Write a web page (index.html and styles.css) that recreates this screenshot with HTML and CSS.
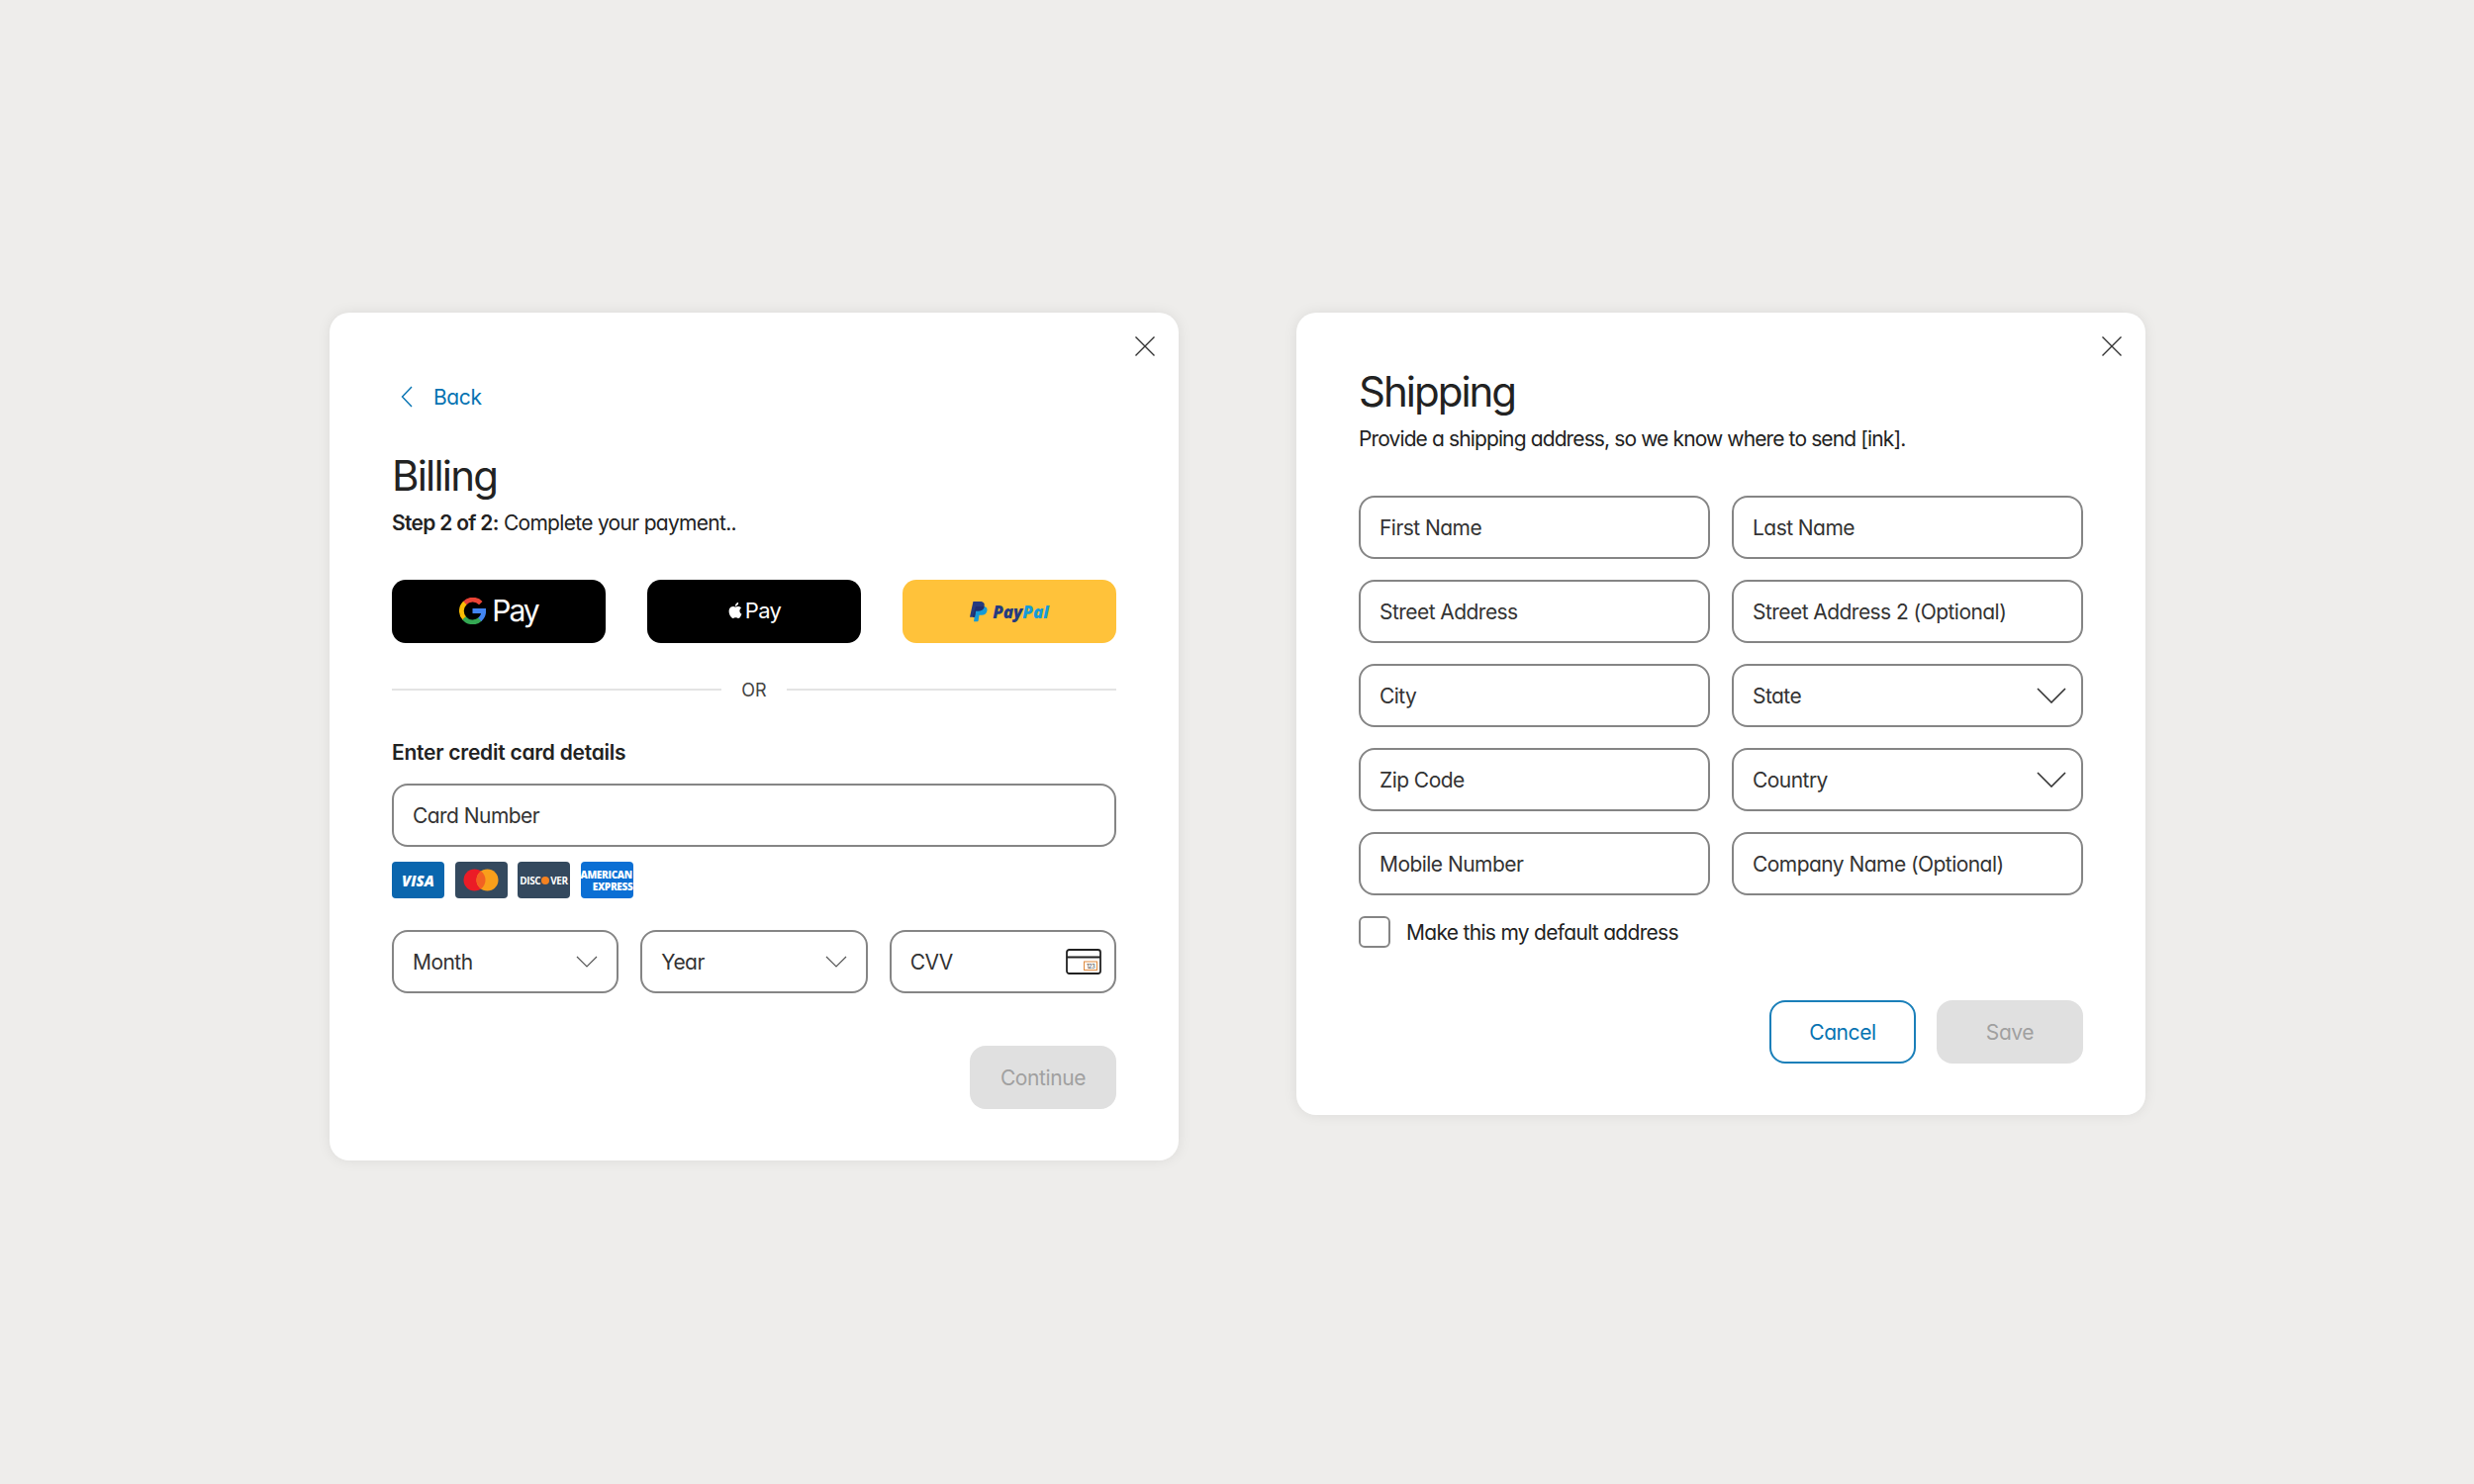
FILE: index.html
```html
<!DOCTYPE html>
<html lang="en">
<head>
    <meta charset="UTF-8">
    <meta name="viewport" content="width=device-width, initial-scale=1.0">
    <title>Billing and Shipping</title>
    <link rel="stylesheet" href="styles.css">
</head>
<body>
    <div class="board">

        <!-- Billing -->
        <section class="card billing">
            <button class="close" aria-label="Close">
                <svg width="20" height="20" viewBox="0 0 20 20"><path d="M0.500 0.500 19.500 19.500M19.500 0.500 0.500 19.500" stroke="#333" stroke-width="1.4" fill="none"/></svg>
            </button>
            <a class="back">
                <svg width="12" height="22" viewBox="0 0 12 22"><path d="M11 1 1.500 11 11 21" stroke="#0673b2" stroke-width="1.4" fill="none"/></svg>
                <span>Back</span>
            </a>
            <h1 class="billing-title">Billing</h1>
            <p class="sub step"><b>Step 2 of 2:</b> Complete your payment..</p>

            <div class="wallets">
                <button class="wallet dark">
                    <svg class="g-logo" width="27" height="27" viewBox="0 0 26 26" fill="none" stroke-width="4.600">
                        <path d="M21 5.400A10.800 10.800 0 0 0 5.200 5.600" stroke="#ea4335"/>
                        <path d="M5.600 5.200A10.800 10.800 0 0 0 5.200 20.400" stroke="#fbbc04"/>
                        <path d="M4.800 19.900A10.800 10.800 0 0 0 20.600 21" stroke="#34a853"/>
                        <path d="M20 21.400A10.800 10.800 0 0 0 23.800 13H13" stroke="#4285f4"/>
                    </svg>
                    <span class="g-pay">Pay</span>
                </button>
                <button class="wallet dark">
                    <svg class="apple-logo" width="15" height="18" viewBox="0 0 15 18"><path fill="#fff" d="M12.400 9.500c0-2 1.600-2.900 1.700-3-.9-1.400-2.400-1.600-2.900-1.600-1.200-.1-2.400.7-3 .7-.6 0-1.600-.7-2.600-.7-1.400 0-2.600.8-3.300 2-1.400 2.400-.4 6 1 8 .7 1 1.500 2.100 2.500 2 1 0 1.400-.6 2.600-.6 1.200 0 1.600.6 2.600.6 1.100 0 1.800-1 2.400-2 .8-1.100 1.100-2.200 1.100-2.300 0 0-2.100-.8-2.100-3.100ZM10.400 3.600c.5-.7.900-1.600.8-2.600-.8 0-1.800.5-2.400 1.200-.5.6-1 1.600-.8 2.500.9.100 1.800-.4 2.400-1.100Z"/></svg>
                    <span class="apple-pay">Pay</span>
                </button>
                <button class="wallet paypal">
                    <svg width="18" height="21" viewBox="0 0 18 21">
                        <path fill="#169bd7" d="M6 5h7.500c3 0 4.500 1.600 4 4.200-.6 3-2.700 4.600-5.500 4.600H9.500l-.9 5.700a1 1 0 0 1-1 .8H4Z"/>
                        <path fill="#253b80" d="M3.400 0h6.800c3.400 0 5 1.700 4.500 4.500-.6 3.300-2.800 5-6 5H6l-1 6.300H0Z"/>
                        <path fill="#1f2f70" d="M6 5h6.800c1 0 1.600.2 1.900.4C14 8 11.900 9.500 8.700 9.500H6L5 15.800H2.800Z"/>
                    </svg>
                    <span class="paypal-name"><i class="pay">Pay</i><i class="pal">Pal</i></span>
                </button>
            </div>

            <div class="divider"><span>OR</span></div>

            <h2 class="label-head">Enter credit card details</h2>
            <div class="field"><span>Card Number</span></div>

            <div class="brands">
                <div class="brand visa"><span>VISA</span></div>
                <div class="brand master">
                    <svg width="36" height="23" viewBox="0 0 36 23">
                        <circle cx="11.500" cy="11.500" r="11" fill="#eb1c26"/>
                        <circle cx="24.500" cy="11.500" r="11" fill="#f99f1b"/>
                        <path d="M18 2.600a11 11 0 0 1 0 17.800 11 11 0 0 1 0-17.800Z" fill="#f26122"/>
                    </svg>
                </div>
                <div class="brand discover"><span>DISC<em></em>VER</span></div>
                <div class="brand amex"><span>AMERICAN</span><span class="amex-b">EXPRESS</span></div>
            </div>

            <div class="expiry">
                <div class="field select-sm">
                    <span>Month</span>
                    <svg width="22" height="12" viewBox="0 0 22 12"><path d="M1 1 11 11 21 1" stroke="#555" stroke-width="1.200" fill="none"/></svg>
                </div>
                <div class="field select-sm">
                    <span>Year</span>
                    <svg width="22" height="12" viewBox="0 0 22 12"><path d="M1 1 11 11 21 1" stroke="#555" stroke-width="1.200" fill="none"/></svg>
                </div>
                <div class="field cvv">
                    <span>CVV</span>
                    <svg width="36" height="26" viewBox="0 0 36 26">
                        <rect x="1" y="1" width="34" height="24" rx="2.500" fill="#fff" stroke="#222" stroke-width="1.800"/>
                        <path d="M1 8.500H35" stroke="#222" stroke-width="1.800"/>
                        <rect x="18.500" y="13" width="13" height="8.500" fill="#fff" stroke="#e08a3c"/>
                        <text x="25" y="19.500" class="cvv-digits">123</text>
                    </svg>
                </div>
            </div>

            <div class="actions">
                <button class="btn disabled">Continue</button>
            </div>
        </section>

        <!-- Shipping -->
        <section class="card shipping">
            <button class="close" aria-label="Close">
                <svg width="20" height="20" viewBox="0 0 20 20"><path d="M0.500 0.500 19.500 19.500M19.500 0.500 0.500 19.500" stroke="#333" stroke-width="1.4" fill="none"/></svg>
            </button>
            <h1>Shipping</h1>
            <p class="sub">Provide a shipping address, so we know where to send [ink].</p>

            <div class="address">
                <div class="field"><span>First Name</span></div>
                <div class="field"><span>Last Name</span></div>
                <div class="field"><span>Street Address</span></div>
                <div class="field"><span>Street Address 2 (Optional)</span></div>
                <div class="field"><span>City</span></div>
                <div class="field select-lg">
                    <span>State</span>
                    <svg width="30" height="16" viewBox="0 0 30 16"><path d="M1 1 15 15 29 1" stroke="#333" stroke-width="1.600" fill="none"/></svg>
                </div>
                <div class="field"><span>Zip Code</span></div>
                <div class="field select-lg">
                    <span>Country</span>
                    <svg width="30" height="16" viewBox="0 0 30 16"><path d="M1 1 15 15 29 1" stroke="#333" stroke-width="1.600" fill="none"/></svg>
                </div>
                <div class="field"><span>Mobile Number</span></div>
                <div class="field"><span>Company Name (Optional)</span></div>
            </div>

            <label class="check"><i class="box"></i><span>Make this my default address</span></label>

            <div class="actions">
                <button class="btn outline">Cancel</button>
                <button class="btn disabled">Save</button>
            </div>
        </section>
    </div>
</body>
</html>
```

FILE: styles.css
```css
* {
    box-sizing: border-box;
}

body {
    margin: 0;
    min-height: 1500px;
    background: #eeedeb;
    font-family: Inter, "Noto Sans", sans-serif;
    font-feature-settings: "cv11" 1;
    color: #222;
}

.board {
    display: flex;
    align-items: flex-start;
    gap: 119px;
    padding: 316px 0 0 333px;
}

.card {
    position: relative;
    width: 858px;
    background: #fff;
    border-radius: 20px;
    padding: 70px 63px 52px;
    box-shadow: 0 0 14px rgba(0,0,0,0.08);
}

.shipping {
    padding-top: 54px;
}

.close {
    position: absolute;
    top: 24px;
    right: 24px;
    width: 20px;
    height: 20px;
    padding: 0;
    border: none;
    background: none;
    display: flex;
}

.back {
    display: flex;
    align-items: center;
    gap: 21px;
    height: 30px;
    padding-left: 9px;
    font-size: 21px;
    letter-spacing: -0.4px;
    color: #0673b2;
}

h1 {
    margin: 0;
    font-size: 42px;
    line-height: 52px;
    font-weight: 400;
    letter-spacing: -2px;
    color: #222;
}

.billing-title {
    margin-top: 39px;
    letter-spacing: -1.8px;
}

.sub {
    margin: 7px 0 0;
    font-size: 21px;
    line-height: 30px;
    letter-spacing: -0.88px;
}

.step {
    letter-spacing: -0.7px;
}

.sub b {
    font-weight: 600;
}

.wallets {
    display: flex;
    gap: 42px;
    margin-top: 42px;
}

.wallet {
    display: flex;
    align-items: center;
    justify-content: center;
    width: 216px;
    height: 64px;
    padding: 0;
    border: none;
    border-radius: 14px;
    font-family: inherit;
}

.dark {
    background: #000;
    color: #fff;
}

.g-logo {
    margin-right: 6px;
    margin-top: -2px;
}

.g-pay {
    font-size: 30px;
    letter-spacing: -2px;
    margin-top: -2px;
    font-feature-settings: normal;
}

.apple-logo {
    margin-right: 3px;
    margin-top: -3px;
}

.apple-pay {
    font-size: 22px;
    letter-spacing: -0.7px;
    margin-top: -2px;
    font-feature-settings: normal;
}

.paypal {
    background: #ffc23a;
    gap: 5px;
}

.paypal-name {
    font-family: "Open Sans", sans-serif;
    font-size: 17px;
    font-weight: 800;
}

.paypal-name i {
    font-style: italic;
}

.pay {
    color: #253b80;
}

.pal {
    color: #169bd7;
}

.divider {
    display: flex;
    align-items: center;
    gap: 20px;
    height: 30px;
    margin-top: 32px;
    font-size: 18px;
    color: #444;
}

.divider::before,
.divider::after {
    content: "";
    flex: 1;
    height: 2px;
    background: #e3e3e3;
}

.label-head {
    margin: 34px 0 0;
    font-size: 21px;
    line-height: 30px;
    font-weight: 600;
    letter-spacing: -0.25px;
}

.field {
    display: flex;
    align-items: center;
    justify-content: space-between;
    height: 64px;
    padding: 0 19px;
    border: 2px solid #858585;
    border-radius: 16px;
    background: #fff;
    font-size: 21px;
    letter-spacing: -0.55px;
    color: #333;
}

.label-head + .field {
    margin-top: 16px;
}

.select-sm {
    padding-right: 19px;
}

.select-lg {
    padding-right: 15px;
}

.brands {
    display: flex;
    gap: 10.5px;
    margin-top: 15px;
}

.brand {
    display: flex;
    flex-direction: column;
    align-items: center;
    justify-content: center;
    width: 53px;
    height: 37px;
    border-radius: 4px;
    color: #fff;
}

.visa {
    background: #0a66ae;
    font-family: "Open Sans", sans-serif;
    font-size: 15px;
    font-weight: 800;
    font-style: italic;
}

.master,
.discover {
    background: #34495e;
}

.discover {
    font-family: "Open Sans", sans-serif;
    font-size: 10px;
    font-weight: 700;
    letter-spacing: -0.4px;
}

.discover em {
    display: inline-block;
    width: 8px;
    height: 8px;
    margin: 0 1px;
    border-radius: 50%;
    background: #f58220;
}

.amex {
    background: #0b6fd4;
    font-family: "Open Sans", sans-serif;
    font-size: 10px;
    line-height: 12px;
    font-weight: 800;
    letter-spacing: -0.3px;
    white-space: nowrap;
}

.amex span {
    align-self: flex-start;
}

.amex .amex-b {
    align-self: flex-end;
}

.expiry {
    display: grid;
    grid-template-columns: repeat(3, 1fr);
    gap: 22px;
    margin-top: 32px;
}

.cvv {
    padding-right: 13px;
}

.cvv-digits {
    font-size: 6px;
    fill: #444;
    text-anchor: middle;
}

.actions {
    display: flex;
    justify-content: flex-end;
    gap: 21px;
    margin-top: 53px;
}

.btn {
    width: 148px;
    height: 64px;
    padding: 0;
    border-radius: 16px;
    font-family: inherit;
    font-feature-settings: "cv11" 1;
    font-size: 21px;
    letter-spacing: -0.4px;
}

.disabled {
    background: #e0e0e0;
    border: none;
    color: #a0a0a0;
}

.outline {
    background: #fff;
    border: 2px solid #1a7fb9;
    color: #0673b2;
}

.address {
    display: grid;
    grid-template-columns: 1fr 1fr;
    gap: 21px 22px;
    margin-top: 42px;
}

.check {
    display: flex;
    align-items: center;
    gap: 16px;
    margin-top: 21px;
    font-size: 21px;
    letter-spacing: -0.7px;
}

.box {
    width: 32px;
    height: 32px;
    border: 2px solid #858585;
    border-radius: 6px;
}
```
